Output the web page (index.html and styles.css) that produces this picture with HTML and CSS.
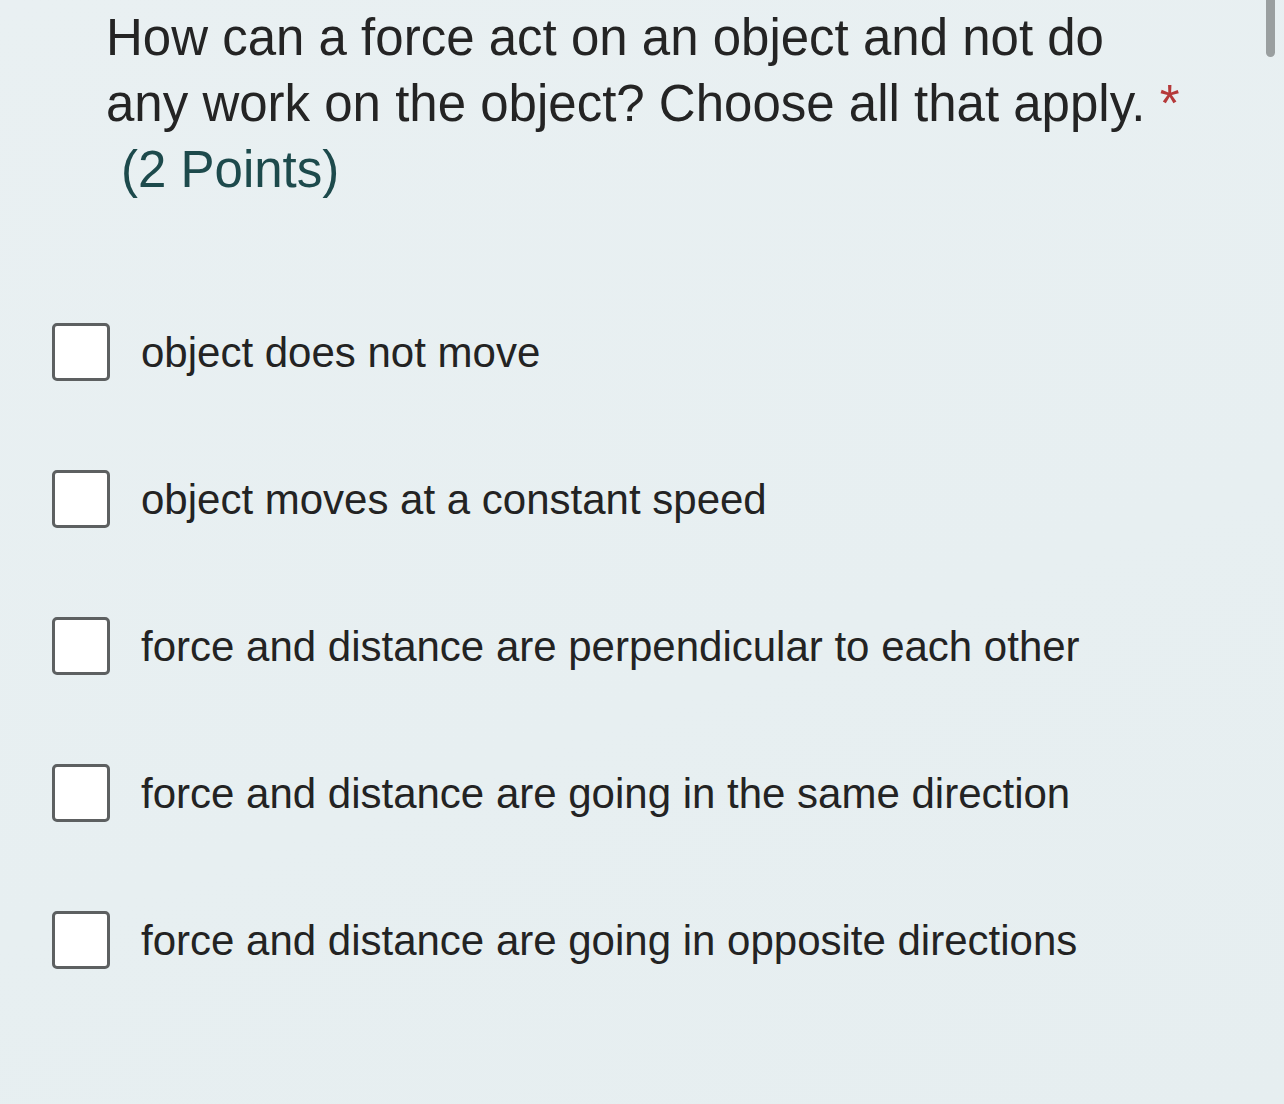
FILE: index.html
```html
<!DOCTYPE html>
<html lang="en">
<head>
<meta charset="utf-8">
<title>Question</title>
<link rel="stylesheet" href="styles.css">
</head>
<body>
<div class="scrollbar"></div>
<main class="question">
  <div class="title">
    <p class="prompt">How can a force act on an object and not do any work on the object? Choose all that apply. <span class="required">*</span></p>
    <p class="points">(2 Points)</p>
  </div>
  <ul class="options">
    <li class="option"><span class="box"></span><span class="label">object does not move</span></li>
    <li class="option"><span class="box"></span><span class="label">object moves at a constant speed</span></li>
    <li class="option"><span class="box"></span><span class="label">force and distance are perpendicular to each other</span></li>
    <li class="option"><span class="box"></span><span class="label">force and distance are going in the same direction</span></li>
    <li class="option"><span class="box"></span><span class="label">force and distance are going in opposite directions</span></li>
  </ul>
</main>
</body>
</html>
```

FILE: styles.css
```css
html, body {
  margin: 0;
  padding: 0;
}
body {
  width: 1284px;
  height: 1104px;
  overflow: hidden;
  background: linear-gradient(160deg, #e9f0f2 0%, #e7eff1 60%, #e6eef0 100%);
  font-family: "Liberation Sans", Arial, sans-serif;
  color: #242424;
  position: relative;
}
.scrollbar {
  position: absolute;
  left: 1266px;
  top: -6px;
  width: 9px;
  height: 63px;
  border-radius: 5px;
  background: #9a9fa0;
}
.question {
  display: flex;
  flex-direction: column;
}
.title {
  padding: 5px 0 0 106px;
  width: 1080px;
  font-size: 51px;
  line-height: 66px;
}
.prompt {
  margin: 0;
}
.required {
  color: #b5393a;
}
.points {
  margin: 0;
  padding-left: 15px;
  color: #1d4a4c;
}
.options {
  list-style: none;
  margin: 75px 0 0 0;
  padding: 0 0 0 52px;
  display: flex;
  flex-direction: column;
}
.option {
  height: 147px;
  display: flex;
  align-items: center;
  gap: 31px;
}
.box {
  box-sizing: border-box;
  width: 58px;
  height: 58px;
  border: 3px solid #5d6061;
  border-radius: 5px;
  background: #ffffff;
  flex: none;
}
.label {
  font-size: 42px;
  line-height: 58px;
  padding-top: 2px;
  color: #232323;
}
```
